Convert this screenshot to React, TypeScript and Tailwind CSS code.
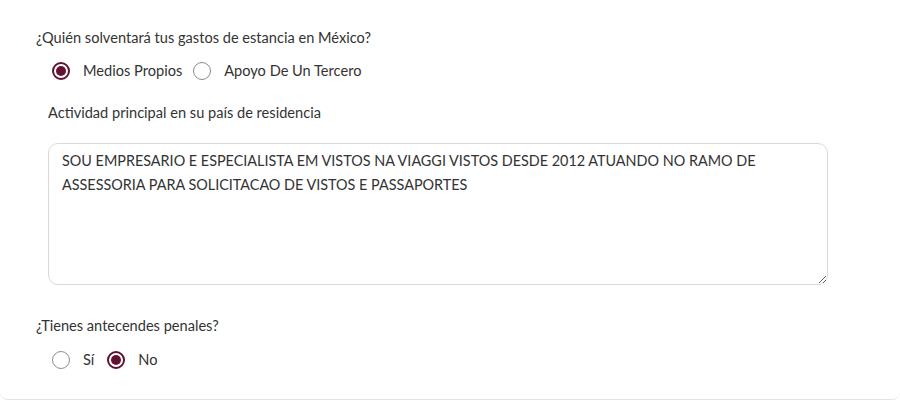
import { useState } from 'react';

type RadioProps = {
    label: string;
    checked: boolean;
    onSelect: () => void;
};

function Radio({ label, checked, onSelect }: RadioProps) {
    return (
        <label className="flex cursor-pointer items-center gap-[13px]" onClick={onSelect}>
            <span
                className={
                    checked
                        ? 'flex size-[18px] items-center justify-center rounded-full border-2 border-[#611232]'
                        : 'flex size-[18px] items-center justify-center rounded-full border-[1.5px] border-[#8c8c8c]'
                }
            >
                {checked && <span className="size-[10px] rounded-full bg-[#611232]" />}
            </span>
            <span>{label}</span>
        </label>
    );
}

export default function App() {
    const [funding, setFunding] = useState('propios');
    const [record, setRecord] = useState('no');

    return (
        <div className="h-[401px] bg-white font-['Lato',sans-serif] text-[14.6px] text-[#333]">
            <div className="rounded-b-lg border-b border-[#e4e4e4] pt-[29px] pb-[29px]">
                <p className="pl-[36px] leading-[18px]">¿Quién solventará tus gastos de estancia en México?</p>
                <div className="mt-[14px] flex h-[20px] items-center gap-[11px] pl-[52px]">
                    <Radio label="Medios Propios" checked={funding === 'propios'} onSelect={() => setFunding('propios')} />
                    <Radio label="Apoyo De Un Tercero" checked={funding === 'tercero'} onSelect={() => setFunding('tercero')} />
                </div>

                <p className="mt-[23px] pl-[48px] leading-[18px]">Actividad principal en su país de residencia</p>
                <div className="mt-[21px] pl-[48px]">
                    <textarea
                        className="block h-[142px] w-[780px] resize-y rounded-[10px] border border-[#dadada] px-[13px] pt-[5px] text-[14.4px] leading-[24px] text-[#333] outline-none"
                        defaultValue="SOU EMPRESARIO E ESPECIALISTA EM VISTOS NA VIAGGI VISTOS DESDE 2012 ATUANDO NO RAMO DE ASSESSORIA PARA SOLICITACAO DE VISTOS E PASSAPORTES"
                    />
                </div>

                <p className="mt-[32px] pl-[36px] leading-[18px]">¿Tienes antecendes penales?</p>
                <div className="mt-[15px] flex h-[20px] items-center gap-[13px] pl-[52px]">
                    <Radio label="Sí" checked={record === 'si'} onSelect={() => setRecord('si')} />
                    <Radio label="No" checked={record === 'no'} onSelect={() => setRecord('no')} />
                </div>
            </div>
        </div>
    );
}
